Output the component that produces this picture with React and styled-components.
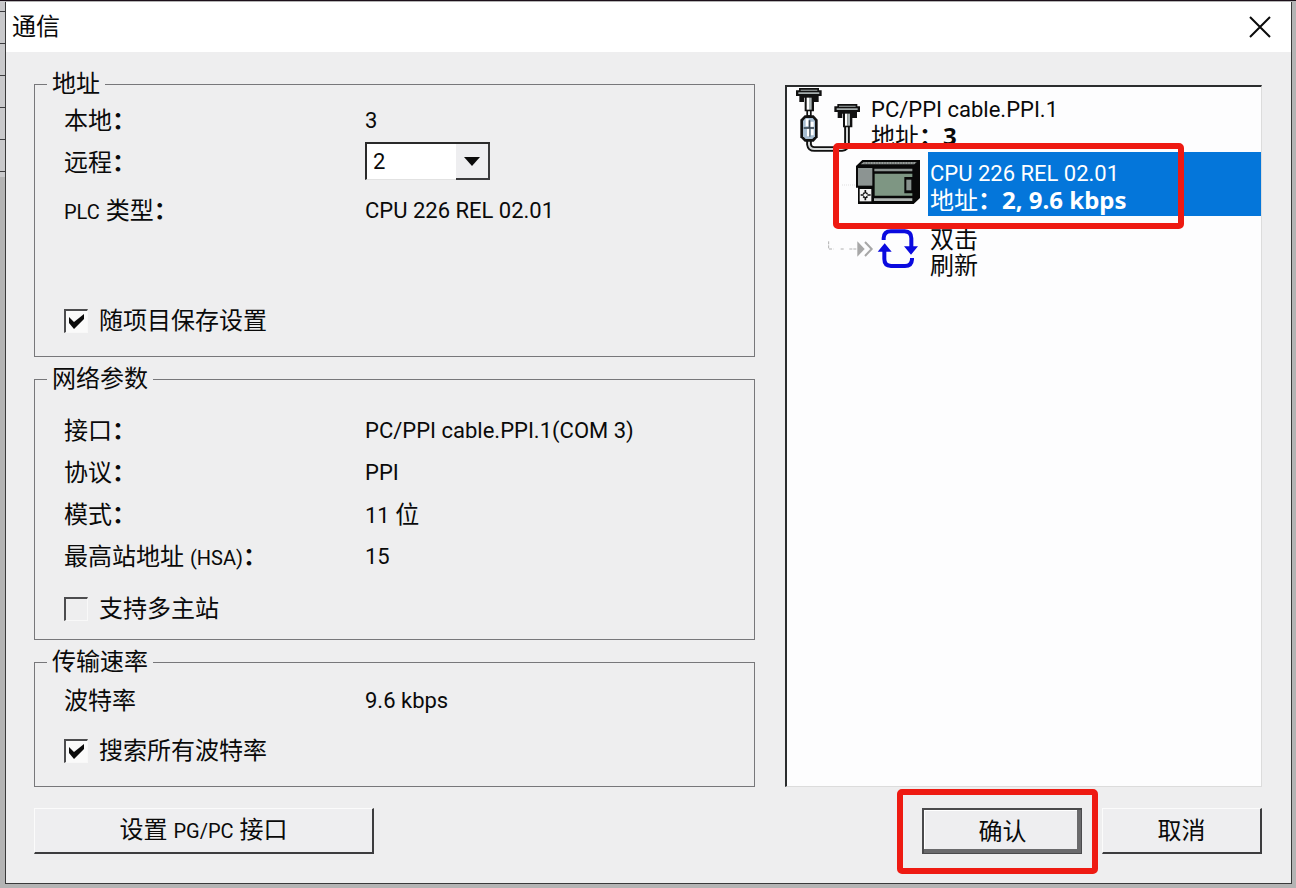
import React, { useState } from 'react';
import styled, { createGlobalStyle, css } from 'styled-components';

const GlobalStyle = createGlobalStyle`
  *, *::before, *::after { box-sizing: border-box; }
  body { margin: 0; background: #bdbdbd; }
  body, button, select, input {
    font-family: Roboto, "Noto Sans CJK SC", sans-serif;
    font-size: 22px;
    line-height: 26px;
    color: #0a0a0a;
  }
`;

const Desktop = styled.div`
  display: flex;
  min-height: 100vh;
  padding: 1px 4px 4px 5px;
  border-top: 1px solid #1c1019;
  background: repeating-linear-gradient(#c9c9cb 0 10px, #3c3c3e 10px 11px, #c9c9cb 11px 32px) 0 0 / 5px 176px no-repeat, #b4b4b4;
`;

const Dialog = styled.section`
  flex: 1;
  display: flex;
  flex-direction: column;
  border: solid #3a3a3a;
  border-width: 0 1px 1px;
  background: #eeeeef;
`;

const TitleBar = styled.header`
  display: flex;
  align-items: center;
  justify-content: space-between;
  height: 50px;
  padding: 0 20px 0 6px;
  background: #fff;
`;

const Title = styled.h1`
  margin: 0;
  font-size: 24px;
  font-weight: 400;
`;

const CloseButton = styled.button`
  display: flex;
  padding: 0;
  border: 0;
  background: none;
`;

const Body = styled.main`
  display: grid;
  grid-template-columns: 721fr 477fr;
  column-gap: 30px;
  row-gap: 21px;
  padding: 18px 29px 28px 28px;
`;

const Groups = styled.div`
  display: flex;
  flex-direction: column;
  gap: 8px;
`;

const Group = styled.fieldset`
  min-width: 0;
  margin: 0;
  padding: ${(p) => p.$top}px 12px ${(p) => p.$bottom}px;
  border: 1px solid #77777a;
`;

const Legend = styled.legend`
  padding: 0 5px;
  font-size: 24px;
  line-height: 28px;
`;

const Field = styled.div`
  display: grid;
  grid-template-columns: 301px 1fr;
  align-items: center;
  height: ${(p) => p.$height || 42}px;
  padding-left: 17px;
`;

const labelText = css`
  font-size: 24px;
`;

const FieldLabel = styled.label`
  ${labelText}
`;

const FieldName = styled.span`
  ${labelText}
`;

const Latin = styled.span`
  font-size: 20px;
`;

const Colon = styled.b`
  font-weight: 700;
`;

const Value = styled.output`
  white-space: nowrap;
`;

const Han = styled.span`
  font-size: 24px;
`;

const SelectBox = styled.span`
  position: relative;
  align-self: start;
  width: 125px;
  height: 38px;
  border: solid;
  border-width: 2px 0 1px 2px;
  border-color: #2a2a2a #2a2a2a #e2e2e2 #2a2a2a;
  background: #fff;
`;

const Select = styled.select`
  display: block;
  width: 100%;
  height: 100%;
  padding: 0 36px 0 6px;
  border: 0;
  appearance: none;
  background: transparent;
`;

const DropArrow = styled.span`
  position: absolute;
  top: 0;
  right: 0;
  bottom: -1px;
  display: flex;
  align-items: center;
  justify-content: center;
  width: 34px;
  border: solid #3a3a3c;
  border-width: 0 2px 2px 0;
  background: #eeeef0;
  pointer-events: none;
`;

const CheckLabel = styled.label`
  display: flex;
  align-items: center;
  gap: 11px;
  width: fit-content;
  height: 42px;
  margin: ${(p) => p.$top}px 0 0 17px;
  font-size: 24px;
`;

const CheckFrame = styled.span`
  display: grid;
  width: 24px;
  height: 24px;
  > * { grid-area: 1 / 1; }
  > svg { pointer-events: none; display: none; }
  > input:checked + svg { display: block; }
`;

const CheckInput = styled.input`
  width: 24px;
  height: 24px;
  margin: 0;
  appearance: none;
  border: solid;
  border-width: 2px 1px 1px 2px;
  border-color: #4c4c4e #f8f8f8 #f8f8f8 #4c4c4e;
  &:checked { background: #fafafa; }
`;

const Tree = styled.ul`
  margin: 15px 0 0;
  padding: 1px 0 0;
  list-style: none;
  overflow: hidden;
  border: solid;
  border-width: 2px 1px 1px 2px;
  border-color: #2b2d2e #dcdcdc #dcdcdc #2b2d2e;
  background: #fdfdfe;
`;

const TreeItem = styled.li`
  position: relative;
  display: flex;
  height: 64px;
`;

const Glyph = styled.svg`
  flex: none;
  overflow: visible;
`;

const TreeText = styled.div`
  flex: 1;
  padding: ${(p) => p.$top || 9}px 0 0 ${(p) => p.$indent || 0}px;
  white-space: nowrap;
  ${(p) => p.$selected && css`
    background: #0476da;
    color: #fff;
  `}
`;

const Line = styled.div`
  height: 26px;
`;

const Strong = styled.b`
  font-family: "Noto Sans", "Noto Sans CJK SC", sans-serif;
  font-size: 24px;
`;

const Highlight = styled.span`
  position: absolute;
  inset: ${(p) => p.$inset};
  z-index: 1;
  border: 6px solid #ee1a12;
  border-radius: 5px;
  pointer-events: none;
`;

const Actions = styled.div`
  display: flex;
  justify-content: ${(p) => p.$align || 'flex-start'};
  gap: 20px;
`;

const ButtonWrap = styled.div`
  position: relative;
`;

const Button = styled.button`
  width: ${(p) => p.$width || 160}px;
  height: 46px;
  padding: 0;
  font-size: 24px;
  background: #eeeef0;
  border: solid;
  border-width: 1px 2px 2px 1px;
  border-color: #fbfbfb #3c3c3e #3c3c3e #fbfbfb;
  ${(p) => p.$primary && css`
    border: 2px solid #4a4a4c;
    border-width: 2px 1px 1px 2px;
    box-shadow: inset -4px -4px 0 #6a6a6c, inset 1px 1px 0 #fff;
  `}
`;

function Check({ top, checked, children }) {
  const [on, setOn] = useState(checked);
  return (
    <CheckLabel $top={top}>
      <CheckFrame>
        <CheckInput type="checkbox" checked={on} onChange={(e) => setOn(e.target.checked)} />
        <svg width="24" height="24" viewBox="0 0 24 24" aria-hidden="true">
          <path d="M5 8 L10 13 L20 5 V10 L10 20 L5 14 Z" fill="#0a0a0a" />
        </svg>
      </CheckFrame>
      {children}
    </CheckLabel>
  );
}

function Name({ children }) {
  return <FieldName>{children}<Colon>：</Colon></FieldName>;
}

function Plug({ x, y }) {
  return (
    <g transform={`translate(${x} ${y})`}>
      <path d="M9 0 H69 V7 H77 V24 H68 V42 H54 V29 H54 V70 H26 V29 H24 V42 H10 V24 H0 V7 H9 Z" fill="#111" />
      <path d="M14 5 H64 V8 H14 Z M7 13 H70 V18 H7 Z" fill="#a5adad" />
      <path d="M32 29 H39 V65 H32 Z" fill="#fff" />
      <path d="M39 29 H47 V65 H39 Z" fill="#a9b2b2" />
    </g>
  );
}

function CableIcon() {
  return (
    <Glyph width="84" height="64" viewBox="21 36 252 192" aria-hidden="true">
      <path d="M87 190 V205 Q89 219 103 219 H186 Q201 218 201 202 V145" fill="none" stroke="#111" strokeWidth="17" />
      <path d="M87 190 V205 Q89 219 103 219 H186 Q201 218 201 202 V145" fill="none" stroke="#d4d7d7" strokeWidth="6" />
      <Plug x={48} y={36} />
      <Plug x={163} y={84} />
      <path d="M79 104 H95 V122 H79 Z" fill="#111" />
      <path d="M84 106 H90 V118 H84 Z" fill="#e9eeee" />
      <path d="M74 118 H101 L113 131 V184 L101 197 H74 L61 184 V131 Z" fill="#111" />
      <path d="M77 126 H98 L105 134 V181 L97 189 H77 L69 181 V134 Z" fill="#a6bdd1" />
      <path d="M77 128 H86 V151 H77 Z M91 137 H101 V152 H91 Z M81 158 H89 V181 H81 Z M93 160 H101 V178 H93 Z" fill="#fff" />
      <path d="M86 133 H91 V154 H102 V158 H91 V182 H88 V158 H71 V154 H86 Z" fill="#35404a" />
    </Glyph>
  );
}

function PlcIcon() {
  return (
    <Glyph width="141" height="64" viewBox="-99 36 423 192" aria-hidden="true">
      <path d="M66 135 H108" stroke="#d2d2d2" strokeWidth="2" strokeDasharray="3 3" />
      <path d="M127 60 H300 V174 L281 192 H114 V143 H108 V78 Z" fill="#080808" />
      <path d="M131 66 H290 L283 73 H122 Z" fill="#969c9a" />
      <path d="M133 69 H288" stroke="#30302f" strokeWidth="2" strokeDasharray="4 4" />
      <path d="M114 84 H157 V137 H114 Z" fill="#8c9492" />
      <path d="M163 86 H277 V94 H163 Z" fill="#8d9592" />
      <path d="M164 101 H277 V111 H253 V160 H277 V167 H164 Z" fill="#7e9683" />
      <path d="M259 119 H274 V151 H259 Z" fill="#87918d" />
      <path d="M162 175 H277 V183 H162 Z" fill="#b2b7b5" />
      <path d="M119 147 H154 V184 H119 Z" fill="#f2f2f2" />
      <path d="M136 150 V160 M136 171 V181 M122 165 H131 M142 165 H152 M130 158 L133 162 M142 158 L139 162 M130 173 L133 169 M142 173 L139 169" stroke="#111" strokeWidth="5" />
    </Glyph>
  );
}

function RefreshIcon() {
  return (
    <Glyph width="141" height="64" viewBox="-99 228 423 192" aria-hidden="true">
      <path d="M26 304 V327 H40 M62 327 H74 M88 327 H110" fill="none" stroke="#b0b0b0" strokeWidth="3" strokeDasharray="9 3" />
      <path d="M112 304 L134 327 L112 350 Z" fill="#a7a7a7" />
      <path d="M135 306 L155 327 L135 348" fill="none" stroke="#a7a7a7" strokeWidth="6" />
      <g fill="none" stroke="#0a0adf" strokeWidth="12">
        <path d="M191 300 V294 Q192 274 212 274 H254 Q274 275 274 295 V321" />
        <path d="M276 354 V358 Q275 378 255 378 H213 Q193 377 193 357 V331" />
      </g>
      <path d="M252 319 H294 L273 344 Z M173 335 H215 L194 310 Z" fill="#0a0adf" />
    </Glyph>
  );
}

export default function App() {
  return (
    <>
      <GlobalStyle />
      <Desktop>
        <Dialog role="dialog" aria-labelledby="dialog-title">
          <TitleBar>
            <Title id="dialog-title">通信</Title>
            <CloseButton type="button" aria-label="关闭">
              <svg width="22" height="22" viewBox="0 0 22 22" aria-hidden="true">
                <path d="M1 1 L21 21 M21 1 L1 21" stroke="#0a0a0a" strokeWidth="2" />
              </svg>
            </CloseButton>
          </TitleBar>
          <Body>
            <Groups>
              <Group $top={2} $bottom={14}>
                <Legend>地址</Legend>
                <Field>
                  <Name>本地</Name>
                  <Value>3</Value>
                </Field>
                <Field>
                  <FieldLabel htmlFor="remote">远程<Colon>：</Colon></FieldLabel>
                  <SelectBox>
                    <Select id="remote" defaultValue="2">
                      <option>2</option>
                    </Select>
                    <DropArrow>
                      <svg width="16" height="9" viewBox="0 0 16 9" aria-hidden="true">
                        <path d="M0 0 H16 L8 9 Z" fill="#0a0a0a" />
                      </svg>
                    </DropArrow>
                  </SelectBox>
                </Field>
                <Field $height={54}>
                  <Name><Latin>PLC</Latin> 类型</Name>
                  <Value>CPU 226 REL 02.01</Value>
                </Field>
                <Check top={62} checked>随项目保存设置</Check>
              </Group>
              <Group $top={17} $bottom={9}>
                <Legend>网络参数</Legend>
                <Field><Name>接口</Name><Value>PC/PPI cable.PPI.1(COM 3)</Value></Field>
                <Field><Name>协议</Name><Value>PPI</Value></Field>
                <Field><Name>模式</Name><Value>11 <Han>位</Han></Value></Field>
                <Field><Name>最高站地址 <Latin>(HSA)</Latin></Name><Value>15</Value></Field>
                <Check top={10} checked={false}>支持多主站</Check>
              </Group>
              <Group $top={4} $bottom={14}>
                <Legend>传输速率</Legend>
                <Field><FieldName>波特率</FieldName><Value>9.6 kbps</Value></Field>
                <Check top={8} checked>搜索所有波特率</Check>
              </Group>
            </Groups>
            <Tree>
              <TreeItem>
                <CableIcon />
                <TreeText>
                  <Line>PC/PPI cable.PPI.1</Line>
                  <Line><Han>地址</Han><Strong>：3</Strong></Line>
                </TreeText>
              </TreeItem>
              <TreeItem aria-current="true">
                <PlcIcon />
                <TreeText $selected $indent={2}>
                  <Line>CPU 226 REL 02.01</Line>
                  <Line><Han>地址</Han><Strong>：2, 9.6 kbps</Strong></Line>
                </TreeText>
                <Highlight $inset="-9px 77px -13px 46px" />
              </TreeItem>
              <TreeItem>
                <RefreshIcon />
                <TreeText $indent={2} $top={11}>
                  <Line><Han>双击</Han></Line>
                  <Line><Han>刷新</Han></Line>
                </TreeText>
              </TreeItem>
            </Tree>
            <Actions>
              <Button type="button" $width={340}>设置 <Latin>PG/PC</Latin> 接口</Button>
            </Actions>
            <Actions $align="flex-end">
              <ButtonWrap>
                <Button type="button" $primary>确认</Button>
                <Highlight $inset="-19px -16px -20px -25px" />
              </ButtonWrap>
              <Button type="button">取消</Button>
            </Actions>
          </Body>
        </Dialog>
      </Desktop>
    </>
  );
}
